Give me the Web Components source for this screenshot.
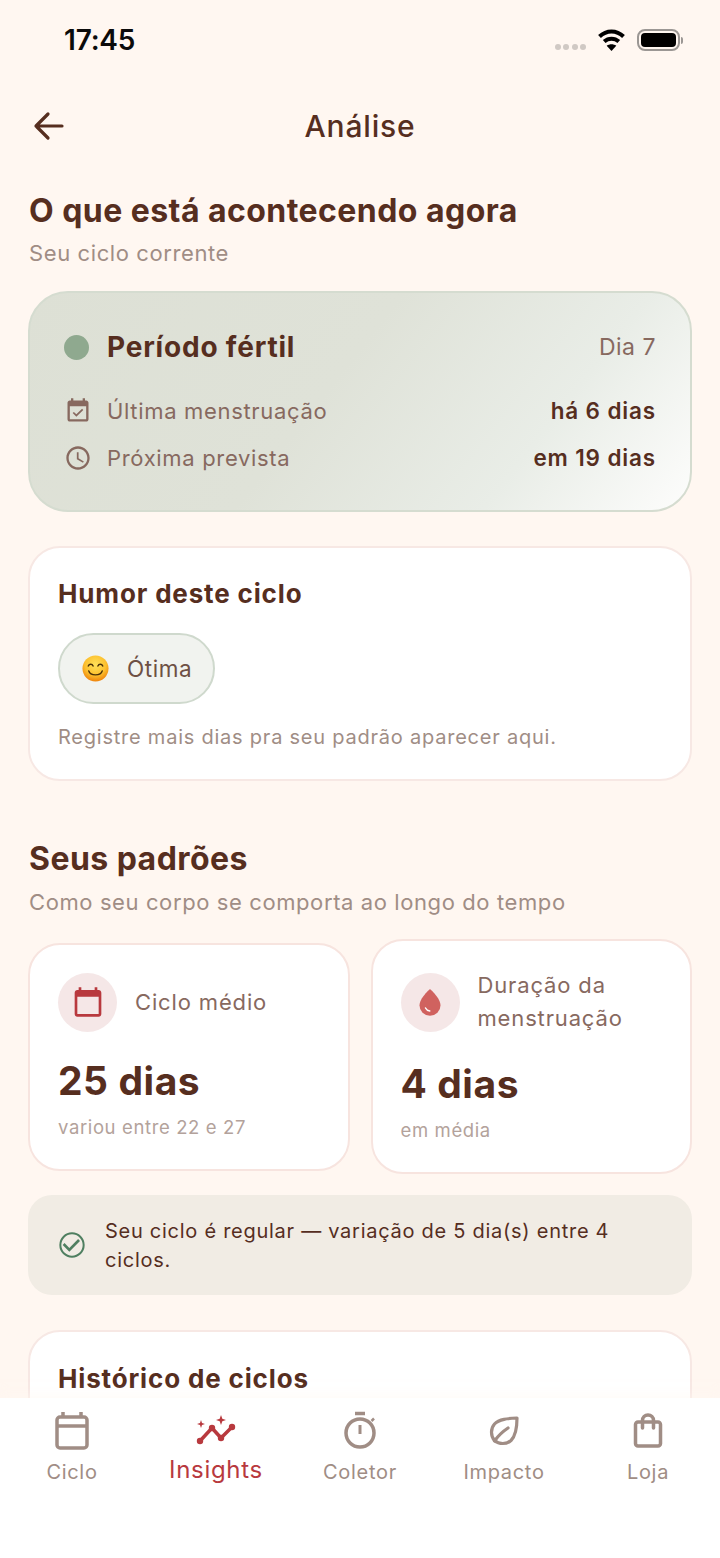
<!DOCTYPE html>
<html lang="pt-BR">
<head>
<meta charset="utf-8">
<title>Análise</title>
<style>
html, body { margin: 0; height: 100%; }
body {
    background: #fff7f1;
    color: #562e1f;
    font-family: Inter, "Noto Sans", sans-serif;
    overflow: hidden;
}
</style>
</head>
<body>
<analise-screen>
    <status-bar></status-bar>
    <top-bar title="Análise"></top-bar>

    <section-title heading="O que está acontecendo agora" sub="Seu ciclo corrente"></section-title>
    <phase-card phase="Período fértil" day="Dia 7">
        <info-row icon="event" label="Última menstruação" value="há 6 dias"></info-row>
        <info-row icon="clock" label="Próxima prevista" value="em 19 dias"></info-row>
    </phase-card>
    <mood-card heading="Humor deste ciclo" mood="Ótima" note="Registre mais dias pra seu padrão aparecer aqui."></mood-card>

    <section-title class="second" heading="Seus padrões" sub="Como seu corpo se comporta ao longo do tempo"></section-title>
    <stat-row>
        <stat-card icon="calendar" label="Ciclo médio" value="25 dias" sub="variou entre 22 e 27"></stat-card>
        <stat-card icon="drop" label="Duração da menstruação" value="4 dias" sub="em média"></stat-card>
    </stat-row>
    <notice-banner>Seu ciclo é regular — variação de 5 dia(s) entre 4 ciclos.</notice-banner>
    <history-card heading="Histórico de ciclos"></history-card>

    <bottom-nav slot="nav">
        <nav-item icon="calendar" label="Ciclo"></nav-item>
        <nav-item icon="insights" label="Insights" active></nav-item>
        <nav-item icon="timer" label="Coletor"></nav-item>
        <nav-item icon="leaf" label="Impacto"></nav-item>
        <nav-item icon="bag" label="Loja"></nav-item>
    </bottom-nav>
</analise-screen>

<script>
const ICONS = {
    event: `<svg width="28" height="28" viewBox="0 0 24 24" fill="currentColor"><path d="M16.53 11.06L15.47 10l-4.88 4.88-2.12-2.12-1.06 1.06L10.59 17l5.94-5.94zM19 3h-1V1h-2v2H8V1H6v2H5c-1.11 0-1.99.9-1.99 2L3 19c0 1.1.89 2 2 2h14c1.1 0 2-.9 2-2V5c0-1.1-.9-2-2-2zm0 16H5V8h14v11z"/></svg>`,
    clock: `<svg width="28" height="28" viewBox="0 0 24 24" fill="currentColor"><path d="M11.99 2C6.47 2 2 6.48 2 12s4.47 10 9.99 10C17.52 22 22 17.52 22 12S17.52 2 11.99 2zM12 20c-4.42 0-8-3.58-8-8s3.58-8 8-8 8 3.58 8 8-3.58 8-8 8zm.5-13H11v6l5.25 3.15.75-1.23-4.5-2.67z"/></svg>`,
    statCalendar: `<svg width="32" height="32" viewBox="0 0 24 24" fill="#b8393e"><path d="M20 3h-1V1h-2v2H7V1H5v2H4c-1.1 0-2 .9-2 2v16c0 1.1.9 2 2 2h16c1.1 0 2-.9 2-2V5c0-1.1-.9-2-2-2zm0 18H4V8h16v13z"/></svg>`,
    statDrop: `<svg width="22" height="27" viewBox="0 0 22 27"><path d="M11 0C11 0 .5 9 .5 16.5a10.5 10.2 0 0 0 21 0C21.500 9 11 0 11 0z" fill="#d0625f"/><path d="M6.500 19c.8 1.700 2.300 2.700 4.300 2.900" fill="none" stroke="#fff" stroke-width="1.500" stroke-linecap="round"/></svg>`,
    calendar: `<svg width="36" height="40" viewBox="0 0 36 40" fill="none" stroke="currentColor" stroke-width="3.500"><rect x="3" y="6" width="30" height="31" rx="3"/><path d="M3 15h30"/><path d="M9 1v6M27 1v6"/></svg>`,
    insights: `<svg width="40" height="32" viewBox="0 0 40 32" fill="currentColor"><path d="M4 26L16 13 25 23 36 12" fill="none" stroke="currentColor" stroke-width="3.500" stroke-linejoin="round"/><circle cx="4" cy="26" r="3.200"/><circle cx="16" cy="13" r="3.200"/><circle cx="25" cy="23" r="3.200"/><circle cx="36" cy="12" r="3.200"/><path d="M5 5l1 3 3 1-3 1-1 3-1-3-3-1 3-1zM25 0l1.300 3.700 3.700 1.300-3.700 1.300-1.300 3.700-1.300-3.700L20 5l3.700-1.300z"/></svg>`,
    timer: `<svg width="36" height="40" viewBox="0 0 36 40" fill="none" stroke="currentColor" stroke-width="3.500"><circle cx="18" cy="22" r="14"/><path d="M13 2.500h10" stroke-width="3.500"/><path d="M18 14v9" stroke-width="3"/><path d="M29.500 10l2.500-2.500" stroke-width="2.500"/></svg>`,
    leaf: `<svg width="32" height="32" viewBox="0 0 32 32" fill="none" stroke="currentColor" stroke-width="3.200" stroke-linejoin="round"><path d="M29 3C20 3.500 11 4 6.500 9 2.500 13.500 2.500 21 6.500 25.500 11 29.500 18.500 29.500 23 25.500 28 20.500 29 12 29 3z"/><path d="M6.500 26C10 21 14 17 20 13" stroke-linecap="round"/></svg>`,
    bag: `<svg width="30" height="38" viewBox="0 0 30 38" fill="none" stroke="currentColor" stroke-width="3.500" stroke-linejoin="round"><rect x="2.500" y="10" width="25" height="24" rx="2.500"/><path d="M9.500 16V8.500a5.500 5.500 0 0 1 11 0V16" stroke-linecap="round"/></svg>`
};

class AnaliseScreen extends HTMLElement {
    constructor(){
        super();
        this.attachShadow({mode: "open"});
        this.shadowRoot.innerHTML = `
        <style>
            :host{ display: flex; flex-direction: column; width: 720px; height: 1558px; overflow: hidden; }
            .scroll{ flex: 1; min-height: 0; overflow: hidden; display: flex; flex-direction: column; }
        </style>
        <div class="scroll"><slot></slot></div>
        <slot name="nav"></slot>`;
    }
}

class StatusBar extends HTMLElement {
    constructor(){
        super();
        this.attachShadow({mode: "open"});
        this.shadowRoot.innerHTML = `
        <style>
            :host{ display: flex; align-items: center; height: 80px; padding: 0 37px 0 64px; flex: none; }
            .time{ font: 600 28px/34px Inter, sans-serif; color: #0b0b0b; flex: 1; letter-spacing: -.2px; }
            .dots{ display: flex; gap: 2.500px; margin: 13px 12px 0 0; }
            .dots i{ width: 6px; height: 6px; border-radius: 50%; background: #d0c9c4; }
            .battery{ display: flex; align-items: center; margin-left: 12px; }
            .shell{ width: 43px; height: 22px; box-sizing: border-box; border: 2px solid #9b9794; border-radius: 8px; padding: 2px; }
            .shell b{ display: block; height: 100%; background: #000; border-radius: 4px; }
            .nub{ width: 2px; height: 7px; background: #9b9794; border-radius: 0 2px 2px 0; margin-left: 1px; }
        </style>
        <span class="time">17:45</span>
        <span class="dots"><i></i><i></i><i></i><i></i></span>
        <svg width="27" height="22" viewBox="0 0 27 22" fill="none" stroke="#000" stroke-width="4"><path d="M1.500 7.500C8.500 .7 18.500 .7 25.500 7.500"/><path d="M6.200 12.500c4.200-3.800 10.400-3.800 14.600 0"/><path d="M13.500 22l-4.800-5.300c2.800-2 6.800-2 9.600 0z" fill="#000" stroke="none"/></svg>
        <span class="battery"><span class="shell"><b></b></span><span class="nub"></span></span>`;
    }
}

class TopBar extends HTMLElement {
    constructor(){
        super();
        this.attachShadow({mode: "open"});
        this.shadowRoot.innerHTML = `
        <style>
            :host{ display: grid; grid-template-columns: 1fr auto 1fr; align-items: center; height: 92px; padding: 0 28px; flex: none; }
            svg{ margin-left: 5px; display: block; }
            h1{ margin: 0; font: 500 30px/40px Inter, sans-serif; letter-spacing: .85px; color: #562e1f; }
        </style>
        <svg width="32" height="30" viewBox="0 0 32 30" fill="none" stroke="#562e1f" stroke-width="3.200" stroke-linecap="round" stroke-linejoin="round"><path d="M29 15H3M15 3L3 15l12 12"/></svg>
        <h1></h1>`;
        this.shadowRoot.querySelector("h1").textContent = this.getAttribute("title");
        this.removeAttribute("title");
    }
}

class SectionTitle extends HTMLElement {
    constructor(){
        super();
        this.attachShadow({mode: "open"});
        this.shadowRoot.innerHTML = `
        <style>
            :host{ display: block; padding: 0 29px; flex: none; margin-top: 17px; }
            :host(.second){ margin-top: 56px; }
            h2{ margin: 0 0 5px; font: 700 32px/44px Inter, sans-serif; letter-spacing: .45px; color: #562e1f; }
            :host(.second) p{ margin-top: 6px; }
            p{ margin: 0; font: 400 22px/30px Inter, sans-serif; letter-spacing: .6px; color: #a08d85; }
        </style>
        <h2></h2><p></p>`;
        this.shadowRoot.querySelector("h2").textContent = this.getAttribute("heading");
        this.shadowRoot.querySelector("p").textContent = this.getAttribute("sub");
    }
}

class PhaseCard extends HTMLElement {
    constructor(){
        super();
        this.attachShadow({mode: "open"});
        this.shadowRoot.innerHTML = `
        <style>
            :host{
                display: block; flex: none; box-sizing: border-box; height: 221px;
                margin: 23px 28px 0; padding: 36px 34px 0 34px;
                border: 2px solid #d5dcd0; border-radius: 40px;
                background: linear-gradient(128deg, #dde0d5 0%, #dfe2d8 45%, #e9ede7 75%, #fdfdfc 100%);
            }
            .head{ display: flex; align-items: center; height: 36px; margin-bottom: 22px; }
            .dot{ width: 25px; height: 25px; border-radius: 50%; background: #8fa98f; margin-right: 18px; }
            .phase{ flex: 1; font: 700 28px/36px Inter, sans-serif; letter-spacing: .8px; color: #562e1f; }
            .day{ font: 400 23px/36px Inter, sans-serif; letter-spacing: .5px; color: #87695f; }
        </style>
        <div class="head"><span class="dot"></span><span class="phase"></span><span class="day"></span></div>
        <slot></slot>`;
        this.shadowRoot.querySelector(".phase").textContent = this.getAttribute("phase");
        this.shadowRoot.querySelector(".day").textContent = this.getAttribute("day");
    }
}

class InfoRow extends HTMLElement {
    constructor(){
        super();
        this.attachShadow({mode: "open"});
        this.shadowRoot.innerHTML = `
        <style>
            :host{ display: flex; align-items: center; height: 47px; color: #87695f; }
            svg{ display: block; }
            .ico{ width: 28px; margin-right: 15px; }
            .label{ flex: 1; font: 400 22px/30px Inter, sans-serif; letter-spacing: .67px; }
            .value{ font: 600 22.500px/30px Inter, sans-serif; letter-spacing: .85px; color: #562e1f; }
        </style>
        <span class="ico">${ICONS[this.getAttribute("icon")]}</span>
        <span class="label"></span><span class="value"></span>`;
        this.shadowRoot.querySelector(".label").textContent = this.getAttribute("label");
        this.shadowRoot.querySelector(".value").textContent = this.getAttribute("value");
    }
}

class MoodCard extends HTMLElement {
    constructor(){
        super();
        this.attachShadow({mode: "open"});
        this.shadowRoot.innerHTML = `
        <style>
            :host{
                display: block; flex: none; box-sizing: border-box; height: 235px;
                margin: 34px 28px 0; padding: 28px 28px 0;
                background: #fff; border: 2px solid #f7e8e4; border-radius: 32px;
            }
            h3{ margin: 0 0 21px; font: 700 26px/36px Inter, sans-serif; letter-spacing: .85px; color: #562e1f; }
            .chip{
                display: inline-flex; align-items: center; height: 71px; box-sizing: border-box;
                padding: 0 21px 0 22px; gap: 18px; border: 2px solid #cfd9cd; border-radius: 36px; background: #f1f3ef;
                font: 400 22.500px/30px Inter, sans-serif; letter-spacing: .6px; color: #6e5044;
            }
            svg{ display: block; }
            p{ margin: 18px 0 0; font: 400 20px/30px Inter, sans-serif; letter-spacing: .77px; color: #a08d85; }
        </style>
        <h3></h3>
        <div class="chip">
            <svg width="27" height="27" viewBox="0 0 28 28">
                <defs><radialGradient id="face" cx="50%" cy="35%" r="62%"><stop offset="0" stop-color="#ffe15a"/><stop offset=".65" stop-color="#fcc02e"/><stop offset="1" stop-color="#f08a10"/></radialGradient></defs>
                <circle cx="14" cy="14" r="13.500" fill="url(#face)"/>
                <path d="M6.500 11.500c1-2.600 4-2.600 5 0M16.500 11.500c1-2.600 4-2.600 5 0" fill="none" stroke="#4a3008" stroke-width="1.500" stroke-linecap="round"/>
                <path d="M7 16.500c1.500 5.500 12.500 5.500 14 0" fill="none" stroke="#4a3008" stroke-width="1.500" stroke-linecap="round"/>
            </svg>
            <span class="mood"></span>
        </div>
        <p></p>`;
        this.shadowRoot.querySelector("h3").textContent = this.getAttribute("heading");
        this.shadowRoot.querySelector(".mood").textContent = this.getAttribute("mood");
        this.shadowRoot.querySelector("p").textContent = this.getAttribute("note");
    }
}

class StatRow extends HTMLElement {
    constructor(){
        super();
        this.attachShadow({mode: "open"});
        this.shadowRoot.innerHTML = `
        <style>
            :host{ display: grid; grid-template-columns: 1fr 1fr; gap: 21px; align-items: center; flex: none; margin: 22px 28px 0; }
        </style>
        <slot></slot>`;
    }
}

class StatCard extends HTMLElement {
    constructor(){
        super();
        const drop = this.getAttribute("icon") == "drop";
        this.attachShadow({mode: "open"});
        this.shadowRoot.innerHTML = `
        <style>
            :host{
                display: block; box-sizing: border-box; min-height: 228px; padding: 28px 28px 29px;
                background: #fff; border: 2px solid #f7e4df; border-radius: 32px;
            }
            .top{ display: flex; align-items: center; gap: 18px; min-height: 59px; }
            .ico{ width: 59px; height: 59px; flex: none; border-radius: 50%; background: #f5e7e7; display: grid; place-items: center; }
            svg{ display: block; }
            .label{ font: 400 22px/33px Inter, sans-serif; letter-spacing: .85px; color: #87695f; }
            .value{ margin-top: 22px; font: 700 39px/54px Inter, sans-serif; letter-spacing: .55px; color: #562e1f; }
            .sub{ margin-top: 6px; font: 400 18.500px/26px Inter, sans-serif; letter-spacing: .62px; color: #b3a29b; }
        </style>
        <div class="top"><span class="ico">${drop ? ICONS.statDrop : ICONS.statCalendar}</span><span class="label"></span></div>
        <div class="value"></div><div class="sub"></div>`;
        this.shadowRoot.querySelector(".label").textContent = this.getAttribute("label");
        this.shadowRoot.querySelector(".value").textContent = this.getAttribute("value");
        this.shadowRoot.querySelector(".sub").textContent = this.getAttribute("sub");
    }
}

class NoticeBanner extends HTMLElement {
    constructor(){
        super();
        this.attachShadow({mode: "open"});
        this.shadowRoot.innerHTML = `
        <style>
            :host{
                display: flex; align-items: center; gap: 17px; flex: none; box-sizing: border-box; height: 100px;
                margin: 21px 28px 0; padding: 0 28px 0 28px; background: #f1ece4; border-radius: 24px;
                font: 400 20px/29px Inter, sans-serif; letter-spacing: .73px; color: #562e1f;
            }
            svg{ display: block; flex: none; }
            span{ padding-top: 1px; }
        </style>
        <svg width="32" height="32" viewBox="0 0 24 24" fill="#4f7f60"><path d="M16.59 7.580L10 14.170l-3.590-3.580L5 12l5 5 8-8zM12 2.500a9.500 9.500 0 1 0 0 19 9.500 9.500 0 0 0 0-19zm0 17.500a8 8 0 1 1 0-16 8 8 0 0 1 0 16z"/></svg>
        <span><slot></slot></span>`;
    }
}

class HistoryCard extends HTMLElement {
    constructor(){
        super();
        this.attachShadow({mode: "open"});
        this.shadowRoot.innerHTML = `
        <style>
            :host{
                display: block; flex: none; box-sizing: border-box; height: 300px;
                margin: 35px 28px 0; padding: 29px 28px 0;
                background: #fff; border: 2px solid #f7e8e4; border-radius: 32px;
            }
            h3{ margin: 0; font: 700 26px/36px Inter, sans-serif; letter-spacing: .85px; color: #562e1f; }
        </style>
        <h3></h3>`;
        this.shadowRoot.querySelector("h3").textContent = this.getAttribute("heading");
    }
}

class BottomNav extends HTMLElement {
    constructor(){
        super();
        this.attachShadow({mode: "open"});
        this.shadowRoot.innerHTML = `
        <style>
            :host{
                display: grid; grid-template-columns: repeat(5, 1fr); align-items: start; flex: none;
                height: 160px; box-sizing: border-box; background: #fff;
                box-shadow: 0 -4px 10px rgba(255, 247, 241, .5);
            }
        </style>
        <slot></slot>`;
    }
}

class NavItem extends HTMLElement {
    constructor(){
        super();
        this.attachShadow({mode: "open"});
        this.shadowRoot.innerHTML = `
        <style>
            :host{ display: flex; flex-direction: column; align-items: center; color: #a08d85; }
            :host([active]){ color: #b8393e; }
            .ico{ height: 42px; margin-top: 12px; display: flex; align-items: center; justify-content: center; }
            svg{ display: block; }
            .label{ margin-top: 6px; font: 400 20px/28px Inter, sans-serif; letter-spacing: .7px; }
            :host([active]) .label{ font-size: 24px; margin-top: 4px; }
        </style>
        <span class="ico">${ICONS[this.getAttribute("icon")]}</span>
        <span class="label"></span>`;
        this.shadowRoot.querySelector(".label").textContent = this.getAttribute("label");
    }
}

customElements.define("analise-screen", AnaliseScreen);
customElements.define("status-bar", StatusBar);
customElements.define("top-bar", TopBar);
customElements.define("section-title", SectionTitle);
customElements.define("phase-card", PhaseCard);
customElements.define("info-row", InfoRow);
customElements.define("mood-card", MoodCard);
customElements.define("stat-row", StatRow);
customElements.define("stat-card", StatCard);
customElements.define("notice-banner", NoticeBanner);
customElements.define("history-card", HistoryCard);
customElements.define("bottom-nav", BottomNav);
customElements.define("nav-item", NavItem);
</script>
</body>
</html>
